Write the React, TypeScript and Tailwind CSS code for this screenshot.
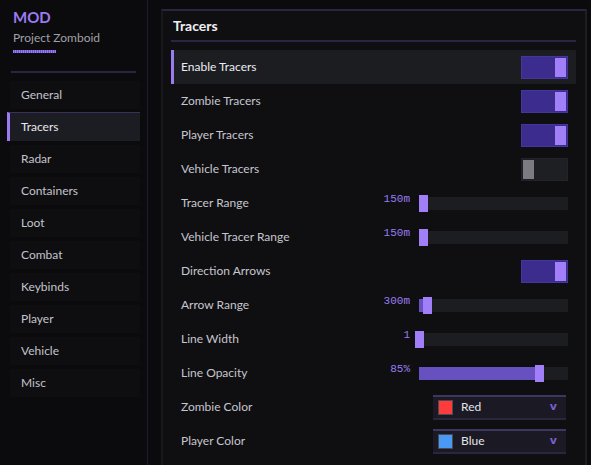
import React from "react";

type Row =
  | { label: string; kind: "toggle"; on: boolean; active?: boolean }
  | { label: string; kind: "slider"; value: string; fill: number; knob: number }
  | { label: string; kind: "select"; value: string; color: string };

const rows: Row[] = [
  { label: "Enable Tracers", kind: "toggle", on: true, active: true },
  { label: "Zombie Tracers", kind: "toggle", on: true },
  { label: "Player Tracers", kind: "toggle", on: true },
  { label: "Vehicle Tracers", kind: "toggle", on: false },
  { label: "Tracer Range", kind: "slider", value: "150m", fill: 0, knob: 0 },
  { label: "Vehicle Tracer Range", kind: "slider", value: "150m", fill: 0, knob: 0 },
  { label: "Direction Arrows", kind: "toggle", on: true },
  { label: "Arrow Range", kind: "slider", value: "300m", fill: 4, knob: 4 },
  { label: "Line Width", kind: "slider", value: "1", fill: 0, knob: -4 },
  { label: "Line Opacity", kind: "slider", value: "85%", fill: 116, knob: 116 },
  { label: "Zombie Color", kind: "select", value: "Red", color: "#ff3c3c" },
  { label: "Player Color", kind: "select", value: "Blue", color: "#4a9af5" },
];

const nav = ["General", "Tracers", "Radar", "Containers", "Loot", "Combat", "Keybinds", "Player", "Vehicle", "Misc"];

function Toggle({ on }: { on: boolean }) {
  return on ? (
    <div className="flex h-[23px] w-[47px] items-center justify-end border border-[#44369c] bg-[#3b2c8e] pr-[1px]">
      <div className="h-[19px] w-[11px] bg-[#a17ff9]" />
    </div>
  ) : (
    <div className="flex h-[23px] w-[47px] items-center justify-start border border-[#232429] bg-[#1e1f23] pl-[1px]">
      <div className="h-[19px] w-[11px] bg-[#7c7b84]" />
    </div>
  );
}

function Slider({ value, fill, knob }: { value: string; fill: number; knob: number }) {
  return (
    <div className="flex items-center gap-[9px]">
      <span
        className="pb-[7px] text-right text-[11px] leading-[13px] text-[#9a7cf0]"
        style={{ fontFamily: '"Liberation Mono", "DejaVu Sans Mono", monospace' }}
      >
        {value}
      </span>
      <div className="relative h-[13px] w-[149px] bg-[#1c1d21]">
        <div className="absolute left-0 top-0 h-[13px] bg-[#6750c0]" style={{ width: fill }} />
        <div className="absolute top-[-2px] h-[17px] w-[9px] bg-[#a17ff9]" style={{ left: knob }} />
      </div>
    </div>
  );
}

function Select({ value, color }: { value: string; color: string }) {
  return (
    <div className="mr-[2px] flex h-[25px] w-[133px] items-center border-t-2 border-b-2 border-t-[#3e3560] border-b-[#2b2540] bg-[#1b1923] pl-[5px] pr-[9px]">
      <div className="h-[15px] w-[15px] border border-[#4a4a55]" style={{ backgroundColor: color }} />
      <span className="ml-[8px] flex-1 text-[12px] text-[#e4e4ea]">{value}</span>
      <span className="text-[11px] font-bold text-[#7a5fd0]" style={{ fontFamily: '"DejaVu Sans", sans-serif' }}>
        v
      </span>
    </div>
  );
}

export default function App() {
  return (
    <div
      className="flex h-[465px] w-[591px] overflow-hidden bg-[#0b0b0d]"
      style={{ fontFamily: 'Lato, "Noto Sans", sans-serif' }}
    >
      {/* Sidebar */}
      <div className="flex h-full w-[148px] shrink-0 flex-col border-r border-[#1e1a33]">
        <div className="pl-[13px] pt-[7px]">
          <div className="text-[15px] font-bold leading-[20px] text-[#9b7cf0]">MOD</div>
          <div className="mt-[3px] text-[12px] leading-[16px] text-[#a0a0a8]">Project Zomboid</div>
          <div className="mt-[4px] h-[3px] w-[43px] bg-[repeating-linear-gradient(90deg,#9b7cf0_0_1px,#6a52c0_1px_2px)]" />
        </div>
        <div className="mx-[11px] mt-[18px] h-[2px] bg-[#2a2540]" />
        <div className="mt-[7px] flex flex-col gap-[3px] pl-[7px] pr-[7px]">
          {nav.map((n) => {
            const active = n === "Tracers";
            return (
              <div
                key={n}
                className={
                  active
                    ? "flex h-[29px] items-center border-l-[3px] border-t border-l-[#9b7cf0] border-t-[#3a3060] bg-[#1c1d22] pl-[11px] text-[12px] text-[#e8e8ee]"
                    : "flex h-[29px] items-center border-l-[3px] border-t border-transparent bg-[#0e0e11] bg-clip-padding pl-[11px] text-[12px] text-[#c4c4cc]"
                }
              >
                {n}
              </div>
            );
          })}
        </div>
      </div>

      {/* Main */}
      <div className="flex-1 pl-[13px] pr-[4px] pt-[9px]">
        <div className="flex h-full flex-col border-l-2 border-r-2 border-t-2 border-l-[#18181d] border-r-[#1e1d24] border-t-[#2a2540] bg-[#0f0f12] pl-[8px] pr-[9px]">
          <div className="flex h-[29px] items-center pl-[2px] text-[14px] font-bold text-[#f0f0f4]">Tracers</div>
          <div className="h-[2px] bg-[#2a2540]" />
          <div className="mt-[8px] flex flex-col">
            {rows.map((r) => {
              const active = r.kind === "toggle" && r.active;
              return (
                <div
                  key={r.label}
                  className={
                    active
                      ? "flex h-[34px] items-center border-l-[3px] border-[#9b7cf0] bg-[#1c1d21] pl-[7px] pr-[8px]"
                      : "flex h-[34px] items-center border-l-[3px] border-transparent pl-[7px] pr-[8px]"
                  }
                >
                  <span className={active ? "flex-1 text-[12px] text-[#ececf2]" : "flex-1 text-[12px] text-[#c6c6ce]"}>
                    {r.label}
                  </span>
                  {r.kind === "toggle" && <Toggle on={r.on} />}
                  {r.kind === "slider" && <Slider value={r.value} fill={r.fill} knob={r.knob} />}
                  {r.kind === "select" && <Select value={r.value} color={r.color} />}
                </div>
              );
            })}
          </div>
        </div>
      </div>
    </div>
  );
}
